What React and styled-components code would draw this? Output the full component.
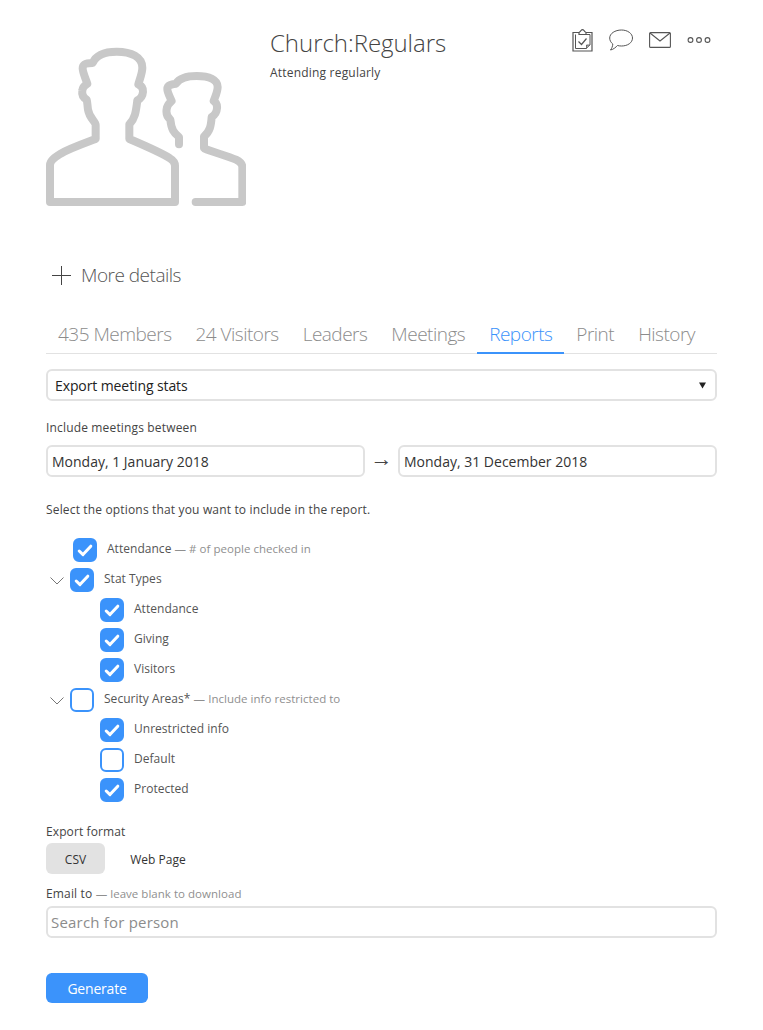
import styled, { createGlobalStyle } from "styled-components";

const GlobalStyle = createGlobalStyle`
  html, body {
    margin: 0;
    padding: 0;
    background: #fff;
    font-family: "Open Sans", "Noto Sans", sans-serif;
    color: #444;
  }
  * {
    box-sizing: border-box;
  }
`;

const Page = styled.div`
  width: 763px;
  height: 1030px;
  padding: 0 46px;
  overflow: hidden;
`;

const Header = styled.div`
  display: flex;
  height: 206px;
  padding-top: 26px;
`;

const Avatar = styled.svg`
  width: 200px;
  height: 160px;
  margin-top: 20px;
  margin-right: 24px;
  flex: none;
`;

const HeaderText = styled.div`
  flex: 1;
`;

const Title = styled.div`
  font-size: 24px;
  font-weight: 300;
  line-height: 34px;
  letter-spacing: -0.03px;
  color: #444;
`;

const Subtitle = styled.div`
  font-size: 12px;
  line-height: 18px;
  margin-top: 4px;
  letter-spacing: 0.2px;
  color: #444;
`;

const Actions = styled.div`
  display: flex;
  align-items: flex-start;
  gap: 16px;
  height: 30px;
  margin-top: 2px;
  margin-right: 6px;
`;

const ActionIcon = styled.svg`
  margin-top: ${(p) => p.$top || 0}px;
`;

const MoreDetails = styled.div`
  display: flex;
  align-items: center;
  margin-top: 54px;
  margin-left: 6px;
  height: 30px;
  font-size: 19px;
  font-weight: 300;
  letter-spacing: -0.5px;
  color: #555;
`;

const PlusIcon = styled.svg`
  width: 19px;
  height: 19px;
  margin-right: 10px;
`;

const Tabs = styled.div`
  display: flex;
  margin-top: 29px;
  height: 35px;
  border-bottom: 1px solid #e2e2e2;
`;

const Tab = styled.div`
  padding: 0 12px;
  height: 35px;
  line-height: 30px;
  font-size: 19px;
  font-weight: 300;
  letter-spacing: -0.51px;
  color: ${(p) => (p.$active ? "#3b93fb" : "#8c8c8c")};
  border-bottom: 2px solid ${(p) => (p.$active ? "#3b93fb" : "transparent")};
`;

const Select = styled.div`
  display: flex;
  align-items: center;
  justify-content: space-between;
  height: 32px;
  margin-top: 15px;
  padding: 0 9px 0 7px;
  border: 2px solid #e2e2e2;
  border-radius: 6px;
  font-size: 14px;
  letter-spacing: -0.1px;
  color: #222;
`;

const Caret = styled.svg`
  width: 7px;
  height: 7px;
`;

const Label = styled.div`
  font-size: 12px;
  line-height: 18px;
  letter-spacing: 0.16px;
  color: #444;
`;

const DateLabel = styled(Label)`
  margin-top: 18px;
`;

const DateRow = styled.div`
  display: flex;
  align-items: center;
  margin-top: 8px;
`;

const Input = styled.input`
  display: block;
  flex: 1;
  width: 100%;
  min-width: 0;
  height: 32px;
  padding: 0 4px;
  border: 2px solid #e2e2e2;
  border-radius: 6px;
  outline: none;
  background: #fff;
  font-family: inherit;
  font-size: 14px;
  letter-spacing: 0;
  color: #333;

  &::placeholder {
    color: #8c8c8c;
    opacity: 1;
  }
`;

const DateArrow = styled.div`
  width: 33px;
  height: 32px;
  line-height: 24px;
  text-align: center;
  font-size: 22px;
  color: #444;
`;

const OptionsLabel = styled(Label)`
  margin-top: 24px;
`;

const Tree = styled.div`
  margin-top: 19px;
  display: flex;
  flex-direction: column;
  gap: 6px;
`;

const Row = styled.div`
  display: flex;
  align-items: center;
  height: 24px;
  padding-left: ${(p) => p.$indent}px;
`;

const Chevron = styled.svg`
  width: 14px;
  height: 8px;
  margin-right: 6px;
  margin-top: 2px;
  flex: none;
`;

const Box = styled.div`
  display: flex;
  align-items: center;
  justify-content: center;
  flex: none;
  width: 24px;
  height: 24px;
  margin-right: 10px;
  border-radius: 6px;
  border: 2px solid #3b93fb;
  background: ${(p) => (p.$checked ? "#3b93fb" : "#fff")};
`;

const RowText = styled.span`
  font-size: 12px;
  letter-spacing: 0.03px;
  color: #555;
  margin-top: -4px;
`;

const Hint = styled.span`
  font-size: 11.5px;
  letter-spacing: 0.03px;
  color: #8f8f8f;
`;

const FormatLabel = styled(Label)`
  margin-top: 21px;
  letter-spacing: 0.1px;
`;

const Formats = styled.div`
  display: flex;
  margin-top: 2px;
`;

const Format = styled.div`
  display: flex;
  align-items: center;
  justify-content: center;
  height: 31px;
  padding-top: 1px;
  width: ${(p) => p.$width}px;
  border-radius: 6px;
  font-size: 12px;
  color: #333;
  background: ${(p) => (p.$active ? "#e2e2e2" : "transparent")};
`;

const EmailLabel = styled(Label)`
  margin-top: 11px;
`;

const SearchInput = styled(Input)`
  margin-top: 3px;
  padding: 0 3px;
  font-size: 15px;
  letter-spacing: 0.2px;
`;

const Generate = styled.button`
  display: block;
  width: 102px;
  height: 30px;
  margin-top: 35px;
  border: none;
  border-radius: 6px;
  background: #3b93fb;
  color: #fff;
  font-family: inherit;
  font-size: 14px;
  letter-spacing: -0.2px;
`;

const Check = () => (
  <svg width="16" height="13" viewBox="0 0 16 13">
    <path d="M2.2 7l3.8 3.6 7.8-8.4" fill="none" stroke="#fff" strokeWidth="3" strokeLinecap="round" strokeLinejoin="round" />
  </svg>
);

const Option = ({ indent, checked, expand, children }) => (
  <Row $indent={indent}>
    {expand && (
      <Chevron viewBox="0 0 14 8">
        <path d="M0.5 0.5L7 7l6.5-6.5" fill="none" stroke="#666" strokeWidth="0.9" />
      </Chevron>
    )}
    <Box $checked={checked}>{checked && <Check />}</Box>
    <RowText>{children}</RowText>
  </Row>
);

const App = () => {
  return (
    <Page>
      <GlobalStyle />
      <Header>
        <Avatar viewBox="48 45 600 480">
          <g fill="none" stroke="#c8c8c8" strokeWidth="24" strokeLinecap="round" strokeLinejoin="round">
            <path d="M60 513V402C60 388 76 378 92 368C120 352 160 338 197 324V282C197 272 178 262 174 236C172 222 172 212 170 206C160 200 155 190 157 178C158 166 166 162 172 158C166 140 158 125 158 112C158 98 170 96 188 96C198 72 226 62 260 62C304 62 337 78 337 110C337 126 330 142 325 160C334 164 340 172 339 182C338 196 330 204 322 208C318 240 316 262 298 280V324C340 342 392 364 420 382C430 388 435 394 435 404V513Z" />
            <path d="M447 340V318C432 306 424 296 421 266C411 258 408 246 410 234C411 224 418 216 425 210C418 194 412 184 412 174C412 162 424 160 438 158C448 142 470 135 500 135C538 135 563 146 563 168C563 182 556 196 551 210C558 214 562 222 561 232C560 246 552 254 545 258C543 284 540 302 522 316V352C550 364 590 374 618 386C630 392 637 398 637 408V513H497" />
          </g>
        </Avatar>
        <HeaderText>
          <Title>Church:Regulars</Title>
          <Subtitle>Attending regularly</Subtitle>
        </HeaderText>
        <Actions>
          <ActionIcon width="21" height="24" viewBox="0 0 21 24" fill="none" stroke="#555" strokeWidth="1.2">
            <path d="M7 4.5H1V23H20V4.5H14" />
            <path d="M7 6.5V4.5C8 4 8.5 3.5 9 2.5C10 1.2 11 1.2 12 2.5C12.5 3.5 13 4 14 4.5V6.5Z" />
            <path d="M3.5 6.5V20.5H14.5L18 17V6.5H14" strokeWidth="1" />
            <path d="M6.5 13.5L9.5 16.5L14.5 10.5" strokeWidth="1.2" />
            <path d="M14.5 20.5V17H18" fill="#aaa" strokeWidth="0.8" />
          </ActionIcon>
          <ActionIcon $top={1} width="24" height="23" viewBox="0 0 24 23" fill="none" stroke="#555" strokeWidth="1">
            <path d="M12.5 1C18.5 1 23.5 4.5 23.5 9C23.5 13.8 18.5 17 12.5 17C11 17 9.5 16.8 8.5 16.5C7 18 4.5 20.5 1.5 21C2.8 19.3 3.6 17.5 3.8 15C1.8 13.5 0.7 11.3 0.7 9C0.7 4.5 6 1 12.5 1Z" />
          </ActionIcon>
          <ActionIcon $top={4} width="22" height="16" viewBox="0 0 22 16" fill="none" stroke="#555" strokeWidth="1.1">
            <rect x="0.6" y="0.6" width="20.8" height="14.8" rx="1" />
            <path d="M1 1L11 9L21 1" />
          </ActionIcon>
          <ActionIcon $top={8} width="24" height="8" viewBox="0 0 24 8" fill="none" stroke="#555" strokeWidth="1.1">
            <circle cx="3.5" cy="4" r="2.4" />
            <circle cx="12" cy="4" r="2.4" />
            <circle cx="20.5" cy="4" r="2.4" />
          </ActionIcon>
        </Actions>
      </Header>

      <MoreDetails>
        <PlusIcon viewBox="0 0 19 19">
          <path d="M9.5 0V19M0 9.5H19" stroke="#444" strokeWidth="1" />
        </PlusIcon>
        More details
      </MoreDetails>

      <Tabs>
        <Tab>435 Members</Tab>
        <Tab>24 Visitors</Tab>
        <Tab>Leaders</Tab>
        <Tab>Meetings</Tab>
        <Tab $active>Reports</Tab>
        <Tab>Print</Tab>
        <Tab>History</Tab>
      </Tabs>

      <Select>
        Export meeting stats
        <Caret viewBox="0 0 7 7">
          <path d="M0 0.5H7L3.5 6.5Z" fill="#222" />
        </Caret>
      </Select>

      <DateLabel>Include meetings between</DateLabel>
      <DateRow>
        <Input defaultValue="Monday, 1 January 2018" />
        <DateArrow>→</DateArrow>
        <Input defaultValue="Monday, 31 December 2018" />
      </DateRow>

      <OptionsLabel>Select the options that you want to include in the report.</OptionsLabel>

      <Tree>
        <Option indent={27} checked>
          Attendance <Hint>— # of people checked in</Hint>
        </Option>
        <Option indent={4} checked expand>
          Stat Types
        </Option>
        <Option indent={54} checked>
          Attendance
        </Option>
        <Option indent={54} checked>
          Giving
        </Option>
        <Option indent={54} checked>
          Visitors
        </Option>
        <Option indent={4} expand>
          Security Areas* <Hint>— Include info restricted to</Hint>
        </Option>
        <Option indent={54} checked>
          Unrestricted info
        </Option>
        <Option indent={54}>Default</Option>
        <Option indent={54} checked>
          Protected
        </Option>
      </Tree>

      <FormatLabel>Export format</FormatLabel>
      <Formats>
        <Format $active $width={59}>CSV</Format>
        <Format $width={106}>Web Page</Format>
      </Formats>

      <EmailLabel>
        Email to <Hint>— leave blank to download</Hint>
      </EmailLabel>
      <SearchInput placeholder="Search for person" />

      <Generate>Generate</Generate>
    </Page>
  );
};

export default App;
